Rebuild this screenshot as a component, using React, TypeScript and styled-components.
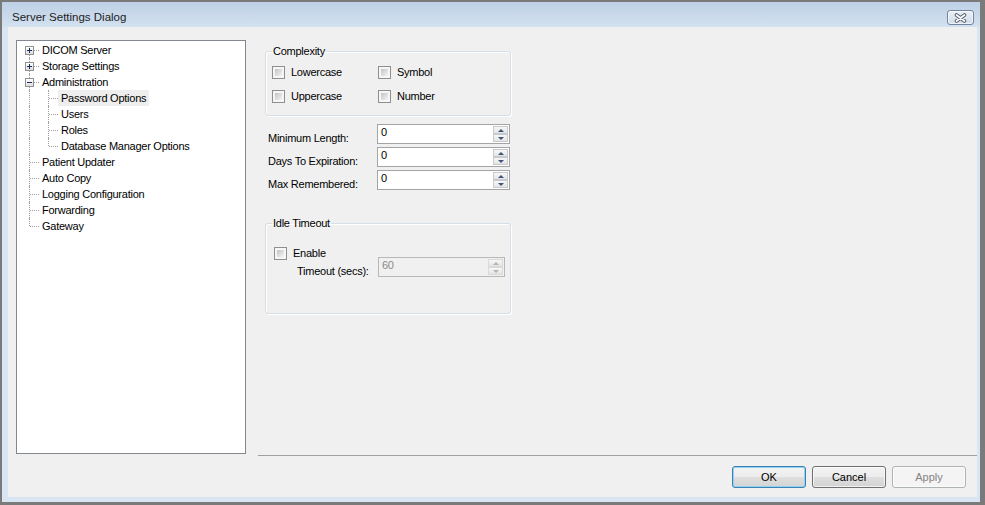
import React from 'react';
import styled, { createGlobalStyle } from 'styled-components';

interface TreeNode {
  label: string;
  level: number;
  expander?: 'plus' | 'minus';
  first?: boolean;
  last?: boolean;
  selected?: boolean;
}

const GlobalStyle = createGlobalStyle`
  html, body {
    margin: 0;
    padding: 0;
    background: #ffffff;
  }
  body {
    font-family: "Liberation Sans", Arial, sans-serif;
    font-size: 11px;
    letter-spacing: -0.25px;
    color: #000000;
  }
  * {
    box-sizing: border-box;
  }
`;

const Window = styled.div`
  width: 985px;
  height: 505px;
  display: flex;
  flex-direction: column;
  border-style: solid;
  border-color: #7a7a7a;
  border-width: 2px 5px 3px 2px;
  background: #d9e5f2;
`;

const TitleBar = styled.div`
  height: 25px;
  flex-shrink: 0;
  display: flex;
  align-items: flex-start;
  justify-content: space-between;
  padding: 8px 6px 0 10px;
  background: linear-gradient(#bdd0e5, #d3e1f0);
`;

const Title = styled.span`
  line-height: 15px;
  font-size: 11.5px;
  letter-spacing: 0;
  color: #1c1c1c;
`;

const CloseButton = styled.div`
  width: 27px;
  height: 15px;
  display: flex;
  align-items: center;
  justify-content: center;
  border: 1px solid #74849a;
  border-radius: 3px;
  background: linear-gradient(#e9eff6, #d2dde9);
  box-shadow: inset 0 0 0 1px rgba(255, 255, 255, 0.6);
`;

const Frame = styled.div`
  flex: 1;
  display: flex;
  padding: 0 3px 5px 6px;
`;

const Client = styled.div`
  flex: 1;
  display: flex;
  flex-direction: column;
  background: #f0f0f0;
`;

const Body = styled.div`
  height: 429px;
  display: flex;
  padding: 13px 0 0 8px;
`;

const Tree = styled.div`
  width: 230px;
  height: 414px;
  flex-shrink: 0;
  align-self: flex-start;
  padding-top: 1px;
  background: #ffffff;
  border: 1px solid #828790;
`;

const TreeRow = styled.div`
  height: 16px;
  display: flex;
`;

const Indent = styled.div<{ $line: boolean }>`
  width: 19px;
  flex-shrink: 0;
  position: relative;
  &::before {
    content: '';
    display: ${({ $line }) => ($line ? 'block' : 'none')};
    position: absolute;
    left: 12px;
    top: 0;
    bottom: 0;
    border-left: 1px dotted #a0a0a0;
  }
`;

const Connector = styled.div<{ $first?: boolean; $last?: boolean }>`
  width: 22px;
  flex-shrink: 0;
  position: relative;
  &::before {
    content: '';
    position: absolute;
    left: 12px;
    top: ${({ $first }) => ($first ? '8px' : '0')};
    bottom: ${({ $last }) => ($last ? '8px' : '0')};
    border-left: 1px dotted #a0a0a0;
  }
  &::after {
    content: '';
    position: absolute;
    left: 13px;
    right: 0;
    top: 8px;
    border-top: 1px dotted #a0a0a0;
  }
`;

const Expander = styled.div<{ $open: boolean }>`
  position: absolute;
  left: 8px;
  top: 4px;
  width: 9px;
  height: 9px;
  z-index: 1;
  border: 1px solid #919191;
  background: linear-gradient(#ffffff, #dcdcdc);
  &::before {
    content: '';
    position: absolute;
    left: 1px;
    top: 3px;
    width: 5px;
    height: 1px;
    background: #1a2a5a;
  }
  &::after {
    content: '';
    display: ${({ $open }) => ($open ? 'none' : 'block')};
    position: absolute;
    left: 3px;
    top: 1px;
    width: 1px;
    height: 5px;
    background: #1a2a5a;
  }
`;

const NodeLabel = styled.span<{ $selected?: boolean }>`
  height: 16px;
  line-height: 16px;
  padding: 0 3px;
  white-space: nowrap;
  background: ${({ $selected }) => ($selected ? '#eeeeee' : 'transparent')};
`;

const RightColumn = styled.div`
  flex: 1;
  margin-left: 12px;
  padding-left: 7px;
  border-bottom: 1px solid #a0a0a0;
`;

const Settings = styled.div`
  width: 246px;
  display: flex;
  flex-direction: column;
`;

const GroupBox = styled.fieldset<{ $top: number; $padTop: number; $height?: number }>`
  margin: ${({ $top }) => $top}px 0 0 0;
  min-width: 0;
  ${({ $height }) => ($height ? `height: ${$height}px;` : '')}
  padding: ${({ $padTop }) => $padTop}px 6px 12px 6px;
  border: 1px solid #d5dfe5;
  border-radius: 3px;
  box-shadow: inset 1px 1px 0 #ffffff, 1px 1px 0 #ffffff;
`;

const Legend = styled.legend`
  padding: 0 1px;
  line-height: 14px;
  color: #000000;
`;

const CheckGrid = styled.div`
  display: grid;
  grid-template-columns: 106px 1fr;
  grid-auto-rows: 13px;
  row-gap: 11px;
`;

const CheckItem = styled.label<{ $indent?: number }>`
  display: flex;
  align-items: center;
  gap: 6px;
  height: 13px;
  line-height: 13px;
  margin-left: ${({ $indent }) => $indent ?? 0}px;
`;

const CheckBox = styled.span`
  width: 13px;
  height: 13px;
  flex-shrink: 0;
  position: relative;
  border: 1px solid #8e8f8f;
  background: #f6f6f6;
  &::after {
    content: '';
    position: absolute;
    inset: 2px;
    background: linear-gradient(135deg, #c4c4c4 0%, #dedede 55%, #f4f4f4 100%);
  }
`;

const FieldGrid = styled.div<{ $label: number; $field: number }>`
  display: grid;
  grid-template-columns: ${({ $label, $field }) => `${$label}px ${$field}px`};
  grid-auto-rows: 20px;
  row-gap: 3px;
`;

const SpinRows = styled(FieldGrid)`
  margin-top: 8px;
`;

const TimeoutRow = styled(FieldGrid)`
  margin-top: -3px;
`;

const FieldLabel = styled.span<{ $indent: number }>`
  padding: 8px 0 0 ${({ $indent }) => $indent}px;
  line-height: 13px;
  white-space: nowrap;
`;

const SpinBox = styled.div<{ $disabled?: boolean }>`
  display: flex;
  height: 20px;
  border: 1px solid ${({ $disabled }) => ($disabled ? '#b8b8b8' : '#a4a4a4')};
  background: ${({ $disabled }) => ($disabled ? '#f0f0f0' : '#ffffff')};
`;

const SpinValue = styled.span<{ $disabled?: boolean }>`
  flex: 1;
  padding: 1px 0 0 3px;
  line-height: 13px;
  color: ${({ $disabled }) => ($disabled ? '#8a8a8a' : '#000000')};
`;

const SpinButtons = styled.div`
  width: 15px;
  display: flex;
  flex-direction: column;
  margin: 1px 1px 1px 0;
`;

const SpinHalf = styled.div<{ $disabled?: boolean }>`
  flex: 1;
  display: flex;
  align-items: center;
  justify-content: center;
  border: 1px solid ${({ $disabled }) => ($disabled ? '#dadada' : '#c6cad0')};
  background: linear-gradient(#f7f7f7, #e4e4e4);
`;

const Arrow = styled.span<{ $dir: 'up' | 'down'; $disabled?: boolean }>`
  width: 0;
  height: 0;
  border-left: 3px solid transparent;
  border-right: 3px solid transparent;
  ${({ $dir, $disabled }) =>
    `border-${$dir === 'up' ? 'bottom' : 'top'}: 3px solid ${$disabled ? '#b4b4b4' : '#3c5478'};`}
`;

const Footer = styled.div`
  display: flex;
  justify-content: flex-end;
  gap: 6px;
  padding: 10px 11px 9px 0;
`;

const Button = styled.button<{ $variant?: 'default' | 'normal' | 'disabled' }>`
  width: 74px;
  height: 22px;
  padding: 0;
  font-family: inherit;
  font-size: 11px;
  border-radius: 3px;
  border: 1px solid
    ${({ $variant }) =>
      $variant === 'default' ? '#3c7fb1' : $variant === 'disabled' ? '#adb2b5' : '#707070'};
  color: ${({ $variant }) => ($variant === 'disabled' ? '#838383' : '#000000')};
  background: ${({ $variant }) =>
    $variant === 'disabled'
      ? '#f4f4f4'
      : 'linear-gradient(#f3f3f3 0%, #ececec 50%, #dfdfdf 50%, #d3d3d3 100%)'};
  box-shadow: ${({ $variant }) =>
    $variant === 'default' ? 'inset 0 0 0 1px #8fd2f6' : 'inset 0 0 0 1px rgba(255,255,255,0.7)'};
`;

const treeNodes: TreeNode[] = [
  { label: 'DICOM Server', level: 0, expander: 'plus', first: true },
  { label: 'Storage Settings', level: 0, expander: 'plus' },
  { label: 'Administration', level: 0, expander: 'minus' },
  { label: 'Password Options', level: 1, selected: true },
  { label: 'Users', level: 1 },
  { label: 'Roles', level: 1 },
  { label: 'Database Manager Options', level: 1, last: true },
  { label: 'Patient Updater', level: 0 },
  { label: 'Auto Copy', level: 0 },
  { label: 'Logging Configuration', level: 0 },
  { label: 'Forwarding', level: 0 },
  { label: 'Gateway', level: 0, last: true },
];

const spinFields = ['Minimum Length:', 'Days To Expiration:', 'Max Remembered:'];

const Spinner = ({ value, disabled }: { value: string; disabled?: boolean }) => (
  <SpinBox $disabled={disabled}>
    <SpinValue $disabled={disabled}>{value}</SpinValue>
    <SpinButtons>
      <SpinHalf $disabled={disabled}>
        <Arrow $dir="up" $disabled={disabled} />
      </SpinHalf>
      <SpinHalf $disabled={disabled}>
        <Arrow $dir="down" $disabled={disabled} />
      </SpinHalf>
    </SpinButtons>
  </SpinBox>
);

const Check = ({ label, indent }: { label: string; indent?: number }) => (
  <CheckItem $indent={indent}>
    <CheckBox />
    <span>{label}</span>
  </CheckItem>
);

export default function App() {
  return (
    <>
      <GlobalStyle />
      <Window>
        <TitleBar>
          <Title>Server Settings Dialog</Title>
          <CloseButton>
            <svg width="13" height="10" viewBox="0 0 13 10">
              <path d="M2.5 2 L10.5 8 M10.5 2 L2.5 8" stroke="#4f5a69" strokeWidth="3.6" strokeLinecap="round" />
              <path d="M2.5 2 L10.5 8 M10.5 2 L2.5 8" stroke="#ffffff" strokeWidth="1.7" strokeLinecap="round" />
            </svg>
          </CloseButton>
        </TitleBar>
        <Frame>
          <Client>
            <Body>
              <Tree>
                {treeNodes.map((node) => (
                  <TreeRow key={node.label}>
                    {node.level > 0 && <Indent $line />}
                    <Connector $first={node.first} $last={node.last}>
                      {node.expander && <Expander $open={node.expander === 'minus'} />}
                    </Connector>
                    <NodeLabel $selected={node.selected}>{node.label}</NodeLabel>
                  </TreeRow>
                ))}
              </Tree>
              <RightColumn>
                <Settings>
                  <GroupBox $top={4} $padTop={8}>
                    <Legend>Complexity</Legend>
                    <CheckGrid>
                      <Check label="Lowercase" />
                      <Check label="Symbol" />
                      <Check label="Uppercase" />
                      <Check label="Number" />
                    </CheckGrid>
                  </GroupBox>
                  <SpinRows $label={112} $field={133}>
                    {spinFields.map((field) => (
                      <React.Fragment key={field}>
                        <FieldLabel $indent={3}>{field}</FieldLabel>
                        <Spinner value="0" />
                      </React.Fragment>
                    ))}
                  </SpinRows>
                  <GroupBox $top={26} $padTop={17} $height={98}>
                    <Legend>Idle Timeout</Legend>
                    <Check label="Enable" indent={2} />
                    <TimeoutRow $label={106} $field={127}>
                      <FieldLabel $indent={25}>Timeout (secs):</FieldLabel>
                      <Spinner value="60" disabled />
                    </TimeoutRow>
                  </GroupBox>
                </Settings>
              </RightColumn>
            </Body>
            <Footer>
              <Button $variant="default">OK</Button>
              <Button $variant="normal">Cancel</Button>
              <Button $variant="disabled">Apply</Button>
            </Footer>
          </Client>
        </Frame>
      </Window>
    </>
  );
}
